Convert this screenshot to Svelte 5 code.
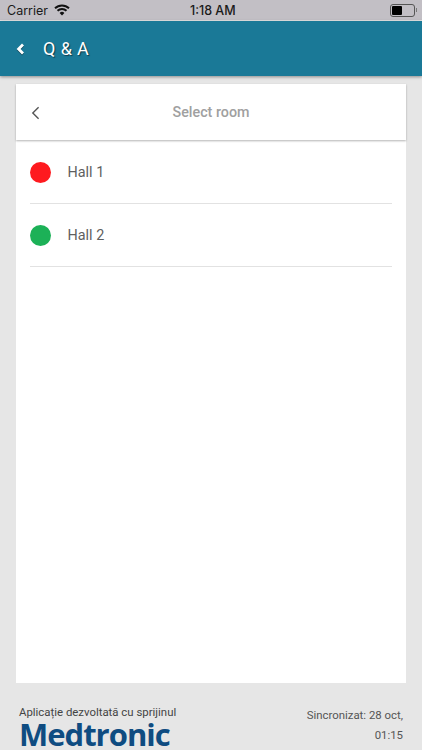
<script>
  const halls = [
    { name: 'Hall 1', color: '#fe1a1f' },
    { name: 'Hall 2', color: '#1cb157' }
  ];
</script>

<div class="page">
  <div class="status">
    <div class="status-left">
      <span>Carrier</span>
      <svg class="wifi" width="16" height="12" viewBox="0 0 16 12">
        <path d="M8 11.5 5.6 8.9a3.4 3.4 0 0 1 4.8 0Z" fill="#111" />
        <path d="M1 4.3a10 10 0 0 1 14 0" fill="none" stroke="#111" stroke-width="1.9" />
        <path d="M3.5 6.8a6.4 6.4 0 0 1 9 0" fill="none" stroke="#111" stroke-width="1.9" />
      </svg>
    </div>
    <span class="time">1:18 AM</span>
    <div class="battery">
      <div class="batt-body"><div class="batt-fill"></div></div>
      <div class="batt-tip"></div>
    </div>
  </div>

  <header class="topbar">
    <svg class="top-back" width="9" height="12" viewBox="0 0 9 12">
      <path d="M7 1.6 2.6 6 7 10.4" fill="none" stroke="#fff" stroke-width="2.8" />
    </svg>
    <span class="top-title">Q &amp; A</span>
  </header>

  <main class="card">
    <div class="card-head">
      <svg class="card-back" width="9" height="14" viewBox="0 0 9 14">
        <path d="M7.6 1.2 1.8 7l5.8 5.8" fill="none" stroke="#555" stroke-width="1.4" />
      </svg>
      <span class="card-title">Select room</span>
    </div>
    <ul class="rooms">
      {#each halls as hall}
        <li class="room">
          <span class="dot" style="background: {hall.color}"></span>
          <span class="room-name">{hall.name}</span>
        </li>
      {/each}
    </ul>
  </main>

  <footer class="footer">
    <div class="sponsor">
      <div class="sponsor-text">Aplicație dezvoltată cu sprijinul</div>
      <div class="logo">Medtronic</div>
    </div>
    <div class="sync">Sincronizat: 28 oct,<br />01:15</div>
  </footer>
</div>

<style>
  :global(body) {
    margin: 0;
    background: #e6e6e6;
  }
  .page {
    width: 422px;
    height: 750px;
    overflow: hidden;
    display: flex;
    flex-direction: column;
    background: #e6e6e6;
    font-family: Roboto, "Liberation Sans", sans-serif;
  }
  .status {
    height: 20px;
    flex: none;
    background: #c2bfc5;
    display: grid;
    grid-template-columns: 183px auto 1fr;
    align-items: center;
    padding: 0 5px 0 7px;
    font-family: Inter, "Liberation Sans", sans-serif;
    font-size: 12.5px;
    color: #1a1a1a;
    box-sizing: border-box;
  }
  .status-left {
    display: flex;
    align-items: center;
    gap: 6px;
  }
  .time {
    font-weight: 500;
  }
  .battery {
    justify-self: end;
    display: flex;
    align-items: center;
    gap: 1px;
  }
  .batt-body {
    width: 21px;
    height: 9px;
    border: 1px solid #555;
    border-radius: 3px;
    padding: 1px;
  }
  .batt-fill {
    width: 10px;
    height: 100%;
    background: #000;
    border-radius: 1px;
  }
  .batt-tip {
    width: 1px;
    height: 4px;
    background: #777;
  }
  .topbar {
    height: 55px;
    margin-top: 1px;
    flex: none;
    background: #1a7997;
    box-shadow: 0 1px 3px rgba(0, 0, 0, 0.4);
    display: flex;
    align-items: center;
    padding-left: 16px;
    gap: 18px;
    position: relative;
    box-sizing: border-box;
  }
  .top-title {
    color: #fff;
    font-size: 18px;
    letter-spacing: 0.4px;
    text-shadow: 1px 1px 1px rgba(0, 0, 0, 0.5);
  }
  .top-back {
    filter: drop-shadow(0 1px 0.5px rgba(0, 0, 0, 0.4));
  }
  .card {
    margin: 8px 16px 0;
    height: 599px;
    flex: none;
    background: #fff;
    display: flex;
    flex-direction: column;
  }
  .card-head {
    height: 56px;
    flex: none;
    display: flex;
    align-items: center;
    justify-content: center;
    position: relative;
    box-shadow: 0 1px 2px rgba(0, 0, 0, 0.3);
  }
  .card-back {
    position: absolute;
    left: 15px;
    top: 22px;
  }
  .card-title {
    font-size: 14.3px;
    font-weight: 500;
    color: #a0a0a0;
  }
  .rooms {
    list-style: none;
    margin: 0;
    padding: 1px 14px 0;
  }
  .room {
    height: 63px;
    box-sizing: border-box;
    border-bottom: 1px solid #e2e2e2;
    display: flex;
    align-items: center;
    gap: 17px;
  }
  .dot {
    width: 21px;
    height: 21px;
    margin-left: -0.5px;
    border-radius: 50%;
    flex: none;
  }
  .room-name {
    font-size: 14.4px;
    color: #5f5f5f;
  }
  .footer {
    flex: 1;
    min-height: 0;
    display: flex;
    justify-content: space-between;
    padding: 22px 19px 0;
  }
  .sponsor-text {
    font-size: 11.4px;
    color: #444;
    line-height: 14px;
  }
  .logo {
    font-family: "Open Sans", sans-serif;
    font-size: 31px;
    font-weight: 700;
    color: #0f4c81;
    line-height: 24px;
    margin-top: 3px;
    letter-spacing: -1px;
  }
  .sync {
    text-align: right;
    font-size: 11.4px;
    color: #555;
    line-height: 20px;
  }
</style>
